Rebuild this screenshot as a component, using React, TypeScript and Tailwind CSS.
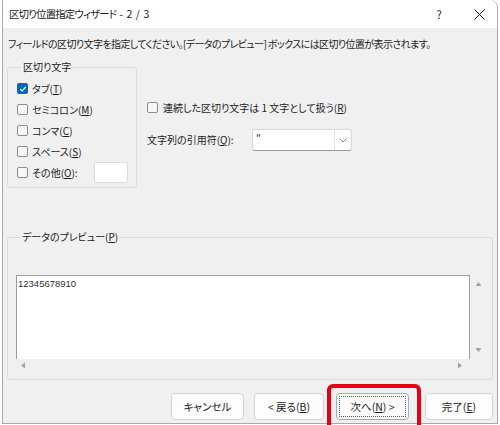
const jp = "font-['Noto_Sans_CJK_JP','Noto_Sans',sans-serif] [font-feature-settings:'palt']";

function Check({ on }: { on?: boolean }) {
  if (on) {
    return (
      <span className="flex w-[11px] h-[11px] shrink-0 items-center justify-center rounded-[2px] bg-[#0067c0]">
        <svg width="8" height="8" viewBox="0 0 8 8">
          <path d="M1.3 4.2 L3.2 6 L6.8 2" fill="none" stroke="#fff" strokeWidth="1.2" />
        </svg>
      </span>
    );
  }
  return <span className="w-[11px] h-[11px] shrink-0 rounded-[2px] border border-[#8c8c8c] bg-[#f7f7f7]" />;
}

function Tri({ dir }: { dir: "up" | "down" | "left" | "right" }) {
  const d = {
    up: "M0.5 5 L3.5 1 L6.5 5 Z",
    down: "M0.5 1 L3.5 5 L6.5 1 Z",
    left: "M5 0.5 L1 3.5 L5 6.5 Z",
    right: "M1 0.5 L5 3.5 L1 6.5 Z",
  }[dir];
  return (
    <svg width="7" height="7" viewBox="0 0 7 7">
      <path d={d} fill="#a3a3a3" />
    </svg>
  );
}

function Row({ on, label, u }: { on?: boolean; label: string; u: string }) {
  return (
    <div className="flex h-[21px] items-center gap-[4px]">
      <Check on={on} />
      <span>
        {label}(<u>{u}</u>)
      </span>
    </div>
  );
}

export default function App() {
  return (
    <div className={`relative w-[500px] h-[425px] bg-white overflow-hidden text-[#1b1b1b] text-[10px] leading-[14px] ${jp}`}>
      <div className="ml-[2px] w-[496px] h-[424px] flex flex-col bg-[#f0f0f0] border-x border-b border-[#a9a9a9] rounded-tr-[8px]">
        {/* title bar */}
        <div className="flex h-[28px] items-center bg-white rounded-tr-[8px]">
          <span className="pl-[6px] text-[10.5px] whitespace-pre">
            <span className="tracking-[-0.9px]">区切り位置指定ウィザード</span>
            <span className="tracking-[0.6px]"> - 2 / 3</span>
          </span>
          <span className="ml-auto w-[44px] text-center text-[11px]">?</span>
          <span className="flex w-[36px] justify-center">
            <svg width="11" height="11" viewBox="0 0 11 11">
              <path d="M0.5 0.5 L10.5 10.5 M10.5 0.5 L0.5 10.5" stroke="#1b1b1b" strokeWidth="1" />
            </svg>
          </span>
        </div>

        <div className="flex h-[32px] items-center pl-[5px] tracking-[-0.6px] whitespace-nowrap">
          フィールドの区切り文字を指定してください。[データのプレビュー] ボックスには区切り位置が表示されます。
        </div>

        {/* top section */}
        <div className="flex h-[128px] pl-[4px]">
          <fieldset className="w-[130px] h-[128px] border border-[#dadada] rounded-[3px] pl-[9px] pt-[4px]">
            <legend className="ml-[4px] px-[2px] leading-[14px]">区切り文字</legend>
            <Row on label="タブ" u="T" />
            <Row label="セミコロン" u="M" />
            <Row label="コンマ" u="C" />
            <Row label="スペース" u="S" />
            <div className="flex h-[21px] items-center gap-[4px]">
              <Check />
              <span className="w-[58px]">
                その他(<u>O</u>):
              </span>
              <span className="w-[34px] h-[21px] bg-white border border-[#dcdcdc] rounded-[2px]" />
            </div>
          </fieldset>

          <div className="ml-[10px] pt-[37px]">
            <div className="flex h-[21px] items-center gap-[5px]">
              <Check />
              <span>
                連続した区切り文字は 1 文字として扱う(<u>R</u>)
              </span>
            </div>
            <div className="mt-[11px] flex h-[22px] items-center">
              <span className="w-[105px]">
                文字列の引用符(<u>Q</u>):
              </span>
              <div className="flex w-[100px] h-[22px] items-center bg-white border border-[#d6d6d6] border-b-[#9a9a9a] rounded-[3px]">
                <span className="flex-1 pl-[3px] -mt-[4px]">"</span>
                <span className="flex w-[17px] h-full items-center justify-center border-l border-[#e4e4e4]">
                  <svg width="8" height="5" viewBox="0 0 8 5">
                    <path d="M0.5 0.5 L4 4 L7.5 0.5" fill="none" stroke="#8a8a8a" strokeWidth="1" />
                  </svg>
                </span>
              </div>
            </div>
          </div>
        </div>

        {/* preview */}
        <fieldset className="mt-[42px] ml-[4px] w-[486px] h-[150px] border border-[#dadada] rounded-[3px] pl-[8px] pt-[31px]">
          <legend className="ml-[4px] px-[2px] leading-[14px]">
            データのプレビュー(<u>P</u>)
          </legend>
          <div className="flex">
            <div className="w-[454px] h-[84px] bg-white border-x border-t border-[#9c9c9c] pl-[1px] pt-[2px] text-[9.5px] leading-[12px] font-['Liberation_Sans',sans-serif] text-[#333]">
              12345678910
            </div>
            <div className="flex w-[16px] h-[84px] flex-col items-center justify-between pt-[6px] pb-[5px]">
              <Tri dir="up" />
              <Tri dir="down" />
            </div>
          </div>
          <div className="flex w-[454px] h-[13px] items-center justify-between pl-[4px] pr-[6px]">
            <Tri dir="left" />
            <Tri dir="right" />
          </div>
        </fieldset>

        {/* buttons */}
        <div className="mt-[13px] flex h-[27px] pl-[168px] text-[10.5px]">
          <button className="w-[73px] h-[27px] bg-[#fdfdfd] border border-[#d3d3d3] rounded-[4px]">キャンセル</button>
          <button className="ml-[10px] w-[70px] h-[27px] bg-[#fdfdfd] border border-[#d3d3d3] rounded-[4px]">
            &lt; 戻る(<u>B</u>)
          </button>
          <button className="ml-[12px] w-[73px] h-[27px] bg-[#fdfdfd] border border-[#8fb0d8] rounded-[4px] outline-1 outline-dotted outline-[#555] -outline-offset-4">
            次へ(<u>N</u>) &gt;
          </button>
          <button className="ml-[16px] w-[68px] h-[27px] bg-[#fdfdfd] border border-[#d3d3d3] rounded-[4px]">
            完了(<u>E</u>)
          </button>
        </div>
      </div>

      {/* annotation */}
      <div className="absolute left-[327px] top-[384px] w-[94px] h-[46px] border-4 border-[#e60012] rounded-[6px]" />
    </div>
  );
}
